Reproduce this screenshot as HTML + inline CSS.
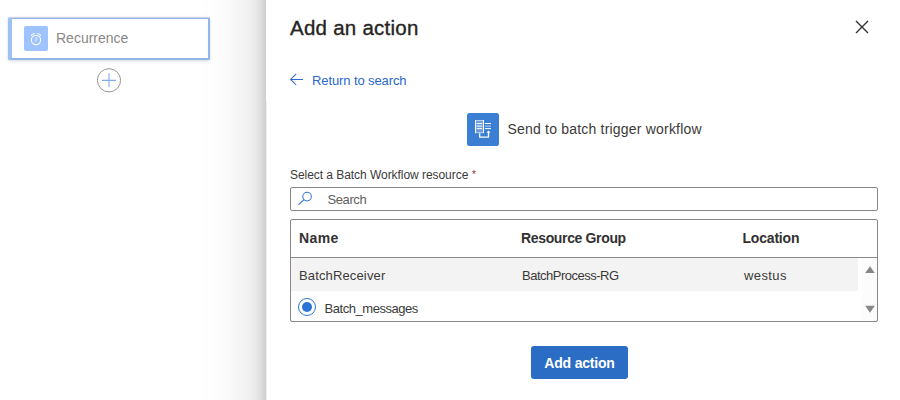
<!DOCTYPE html>
<html><head><meta charset="utf-8">
<style>
*{box-sizing:border-box;margin:0;padding:0}
html,body{width:900px;height:400px;overflow:hidden;background:#fff;font-family:"Liberation Sans",sans-serif;color:#323130}
.abs{position:absolute}
#card{position:absolute;left:8px;top:17px;width:202px;height:43px;border:2px solid #92b7eb;border-top:1px solid #cad6e6;border-left:4px solid #9ec0f5;border-radius:2px;background:#fff;box-shadow:inset 0 1px 0 #90b5ea,0 0 2px rgba(0,0,0,.10),0 1.6px 3.6px rgba(0,0,0,.09)}
#cicon{position:absolute;left:24px;top:26px;width:24px;height:25px;background:#9ec3ff;border-radius:2px}
#ctext{position:absolute;left:56px;top:30px;font-size:14px;color:#8a8886;line-height:16px}
#panel{position:absolute;left:266px;top:-100px;width:700px;height:600px;background:#fff;box-shadow:0 25.6px 57.6px 0 rgba(0,0,0,.22),0 4.8px 14.4px 0 rgba(0,0,0,.18)}
#title{position:absolute;left:290px;top:15.7px;letter-spacing:0.25px;font-size:20.5px;-webkit-text-stroke:0.35px #252423;line-height:24px;color:#252423}
#close{position:absolute;left:855px;top:20px}
#back{position:absolute;left:312px;top:73px;font-size:13px;letter-spacing:-0.1px;color:#2a68cf;line-height:16px}
#aicon{position:absolute;left:467px;top:113px;width:32px;height:33px;background:#3a7fd4;border-radius:2.5px}
#atext{position:absolute;left:507.5px;top:121px;font-size:14px;letter-spacing:0.2px;line-height:16px;color:#3b3a39}
#label{position:absolute;left:290px;top:168px;font-size:12px;letter-spacing:-0.05px;line-height:14px;color:#3b3a39}
#search{position:absolute;left:290px;top:187px;width:588px;height:24px;border:1px solid #8a8886;border-radius:2px}
#stext{position:absolute;left:327.5px;top:192px;font-size:13px;letter-spacing:-0.4px;line-height:15px;color:#605e5c}
#table{position:absolute;left:290px;top:219px;width:588px;height:103px;border:1px solid #8a8886;border-radius:2px}
.th{position:absolute;top:230px;font-size:14px;font-weight:bold;line-height:16px;color:#323130}
#row{position:absolute;left:291px;top:258px;width:567px;height:33px;background:#f3f3f3}
#hline{position:absolute;left:291px;top:257px;width:586px;height:1px;background:#8a8886}
.td{position:absolute;top:268px;font-size:13px;line-height:15px;color:#3b3a39}
#radio{position:absolute;left:298px;top:298px;width:18px;height:18px;border:1px solid #2f76d6;border-radius:50%}
#radio::after{content:"";position:absolute;left:3px;top:3px;width:10px;height:10px;border-radius:50%;background:#2b73d6}
#rtext{position:absolute;left:324.5px;top:301px;font-size:13px;letter-spacing:-0.45px;line-height:15px;color:#3b3a39}
#btn{position:absolute;left:531px;top:346px;width:97px;height:33px;background:#2b6cc4;border-radius:3px;color:#fff;font-weight:bold;font-size:14px;letter-spacing:-0.2px;line-height:35.5px;text-align:center}
</style></head><body>
<div id="card"></div>
<div id="cicon"><svg width="24" height="24" viewBox="0 0 24 24"><circle cx="12" cy="14" r="4.6" fill="none" stroke="#fff" stroke-width="1.1"/><path d="M12.2 11.2v2.6q0 1.3-1.4 1.7" fill="none" stroke="#fff" stroke-width="0.9"/><path d="M7.2 10Q7.8 7.3 10.8 7.8M16.8 10Q16.2 7.3 13.2 7.8" fill="none" stroke="#fff" stroke-width="1.1"/></svg></div>
<div id="ctext">Recurrence</div>
<svg class="abs" style="left:96px;top:67px" width="26" height="27" viewBox="0 0 26 27"><circle cx="13" cy="13.3" r="11.6" fill="#fff" stroke="#9a9896" stroke-width="1"/><path d="M13 6.2v14M6 13.4h14" stroke="#7aaaf0" stroke-width="1.1"/></svg>
<div id="panel"></div>
<div class="abs" style="left:266px;top:101px;width:1px;height:299px;background:#ececec"></div>
<div id="title">Add an action</div>
<div id="close"><svg width="14" height="14" viewBox="0 0 14 14"><path d="M1 1L13 13M13 1L1 13" stroke="#323130" stroke-width="1.35"/></svg></div>
<svg class="abs" style="left:286px;top:70px" width="20" height="20" viewBox="0 0 20 20"><path d="M4.6 9.4H17M10.2 3.8L4.6 9.4L10.2 15" fill="none" stroke="#2f6cd2" stroke-width="1.05"/></svg>
<div id="back">Return to search</div>
<div id="aicon"><svg width="32" height="33" viewBox="0 0 32 33"><rect x="8.5" y="7.5" width="8" height="12.2" fill="rgba(255,255,255,0.25)"/><path d="M8.5 7v13.2M16.5 7v13.2" stroke="#fff" stroke-width="1"/><path d="M9 7.5h7M9 19.7h7" stroke="rgba(255,255,255,0.6)" stroke-width="1"/><path d="M9.7 10.5h5.5M9.7 13.1h5.5M9.7 15.6h5.5M17.9 10.5h6.1M17.9 15.6h6.1" stroke="#fff" stroke-width="1"/><path d="M17.9 13.1h6.1" stroke="rgba(255,255,255,0.7)" stroke-width="1"/><path d="M12.7 20.2V24.2H21.5V18.8" fill="none" stroke="#fff" stroke-width="1.3"/><path d="M19.4 19.8L21.5 17.4L23.6 19.8Z" fill="#fff"/></svg></div>
<div id="atext">Send to batch trigger workflow</div>
<div id="label">Select a Batch Workflow resource <span style="color:#a4262c;font-size:10px;position:relative;top:-1px;left:0.5px">*</span></div>
<div id="search"></div>
<svg class="abs" style="left:294px;top:188px" width="22" height="22" viewBox="0 0 22 22"><circle cx="13.1" cy="8.6" r="4.3" fill="none" stroke="#3277d8" stroke-width="1.05"/><path d="M10 11.6L4.6 16.6" stroke="#3277d8" stroke-width="1.15"/></svg>
<div id="stext">Search</div>
<div id="table"></div>
<div id="hline"></div>
<div id="row"></div>
<div class="th" style="left:299px;letter-spacing:0.4px">Name</div>
<div class="th" style="left:521px;letter-spacing:-0.35px">Resource Group</div>
<div class="th" style="left:742.5px;letter-spacing:-0.2px">Location</div>
<div class="td" style="left:299px;letter-spacing:0.14px">BatchReceiver</div>
<div class="td" style="left:522px;letter-spacing:-0.5px">BatchProcess-RG</div>
<div class="td" style="left:744px;letter-spacing:0.4px">westus</div>
<div class="abs" style="left:862px;top:258px;width:15px;height:62px;background:#fcfcfc"></div>
<svg class="abs" style="left:864px;top:264px" width="12" height="52" viewBox="0 0 12 52"><path d="M1.2 9L6 2.3L10.8 9Z" fill="#868686"/><path d="M1.2 41.8L6 48.8L10.8 41.8Z" fill="#868686"/></svg>
<div id="radio"></div>
<div id="rtext">Batch_messages</div>
<div id="btn">Add action</div>
</body></html>
